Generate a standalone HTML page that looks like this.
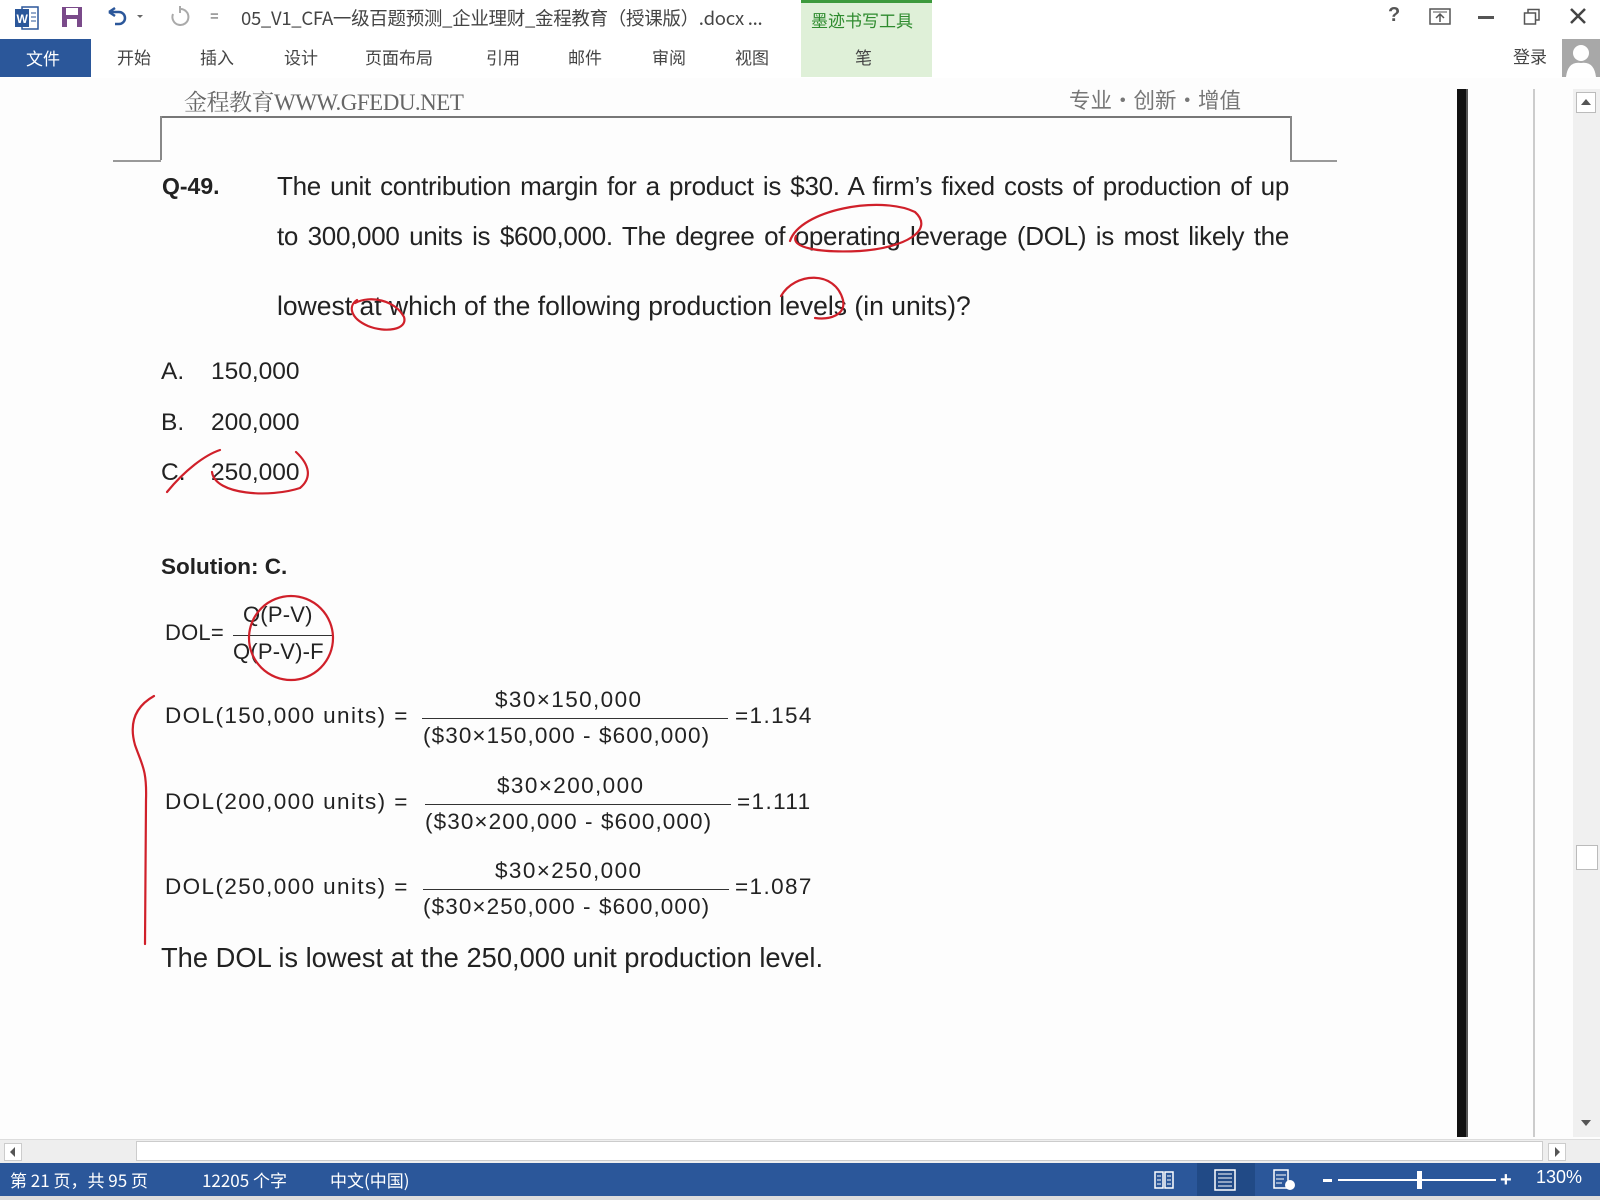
<!DOCTYPE html>
<html><head><meta charset="utf-8">
<style>
*{margin:0;padding:0;box-sizing:border-box}
body{width:1600px;height:1200px;position:relative;overflow:hidden;background:#fdfdfd;font-family:"Liberation Sans","Noto Sans CJK SC",sans-serif;color:#222}
.a{position:absolute;white-space:nowrap}
.cj{font-family:"Noto Sans CJK SC","WenQuanYi Zen Hei",sans-serif}
.tab{position:absolute;top:44px;font-size:17px;color:#444;font-family:"Noto Sans CJK SC",sans-serif}
.q{font-size:24.5px;color:#222}
.m{font-size:22.5px;letter-spacing:1.4px;color:#222}
.fr{position:absolute;border-top:1.5px solid #333}
.st{color:#fff;font-size:17px;font-family:"Noto Sans CJK SC",sans-serif;top:1167px}
</style></head><body>
<div class="a" style="left:0;top:0;width:1600px;height:78px;background:#fff"></div>
<svg class="a" style="left:14px;top:6px" width="26" height="24" viewBox="0 0 26 24"><rect x="8" y="1" width="16" height="22" fill="#fff" stroke="#2b579a" stroke-width="1.5"/><rect x="1" y="3" width="14" height="18" fill="#2b579a"/><text x="2.5" y="17" font-size="12" font-weight="bold" fill="#fff" font-family="Liberation Sans">W</text><line x1="17" y1="7" x2="22" y2="7" stroke="#2b579a"/><line x1="17" y1="11" x2="22" y2="11" stroke="#2b579a"/><line x1="17" y1="15" x2="22" y2="15" stroke="#2b579a"/></svg>
<svg class="a" style="left:61px;top:6px" width="22" height="22" viewBox="0 0 22 22"><rect x="1" y="1" width="20" height="20" fill="#7a4a8a"/><rect x="5" y="2" width="12" height="7" fill="#fff"/><rect x="6" y="13" width="10" height="8" fill="#fff"/></svg>
<svg class="a" style="left:105px;top:6px" width="40" height="22" viewBox="0 0 40 22"><path d="M4 6 L10 2 M4 6 L10 10 M4 6 H14 A6 6 0 0 1 14 18 H10" fill="none" stroke="#2b579a" stroke-width="2.5"/><path d="M32 9 l3 3 l3 -3z" fill="#666"/></svg>
<svg class="a" style="left:168px;top:5px" width="22" height="24" viewBox="0 0 22 24"><path d="M12 4 A8 8 0 1 1 5 9" fill="none" stroke="#aaa" stroke-width="2"/><path d="M12 1 v7" stroke="#aaa" stroke-width="2"/></svg>
<div class="a" style="left:210px;top:8px;font-size:15px;color:#666">=</div>
<div class="a cj" style="left:241px;top:5px;font-size:18.5px;color:#444;letter-spacing:-0.3px">05_V1_CFA一级百题预测_企业理财_金程教育（授课版）.docx ...</div>
<div class="a" style="left:801px;top:0;width:131px;height:77px;background:#dff0d8;border-top:3px solid #3c9a3c"></div>
<div class="a cj" style="left:811px;top:7px;font-size:17px;color:#2e8b2e">墨迹书写工具</div>
<div class="a cj" style="left:855px;top:44px;font-size:17px;color:#444">笔</div>
<div class="a" style="left:0;top:39px;width:91px;height:38px;background:#2b579a"></div>
<div class="a cj" style="left:26px;top:45px;font-size:17px;color:#fff">文件</div>
<div class="tab" style="left:117px">开始</div>
<div class="tab" style="left:200px">插入</div>
<div class="tab" style="left:284px">设计</div>
<div class="tab" style="left:365px">页面布局</div>
<div class="tab" style="left:486px">引用</div>
<div class="tab" style="left:568px">邮件</div>
<div class="tab" style="left:652px">审阅</div>
<div class="tab" style="left:735px">视图</div>
<div class="a" style="left:1388px;top:4px;font-size:20px;font-weight:bold;color:#555">?</div>
<svg class="a" style="left:1429px;top:8px" width="22" height="18"><rect x="1" y="1" width="20" height="15" fill="none" stroke="#555" stroke-width="1.5"/><path d="M7 10 l4 -4 l4 4 M11 6 v8" stroke="#555" fill="none" stroke-width="1.5"/><line x1="4" y1="4" x2="18" y2="4" stroke="#555"/></svg>
<div class="a" style="left:1478px;top:16px;width:16px;height:2.5px;background:#555"></div>
<svg class="a" style="left:1523px;top:8px" width="18" height="18"><rect x="1.5" y="5" width="11" height="11" fill="none" stroke="#555" stroke-width="1.5"/><path d="M5 5 V1.5 H16 V12 H12.5" fill="none" stroke="#555" stroke-width="1.5"/></svg>
<svg class="a" style="left:1569px;top:7px" width="18" height="18"><path d="M2 2 L16 16 M16 2 L2 16" stroke="#444" stroke-width="2.5"/></svg>
<div class="a cj" style="left:1513px;top:43px;font-size:17px;color:#444">登录</div>
<svg class="a" style="left:1562px;top:39px" width="38" height="38"><rect width="38" height="38" fill="#a8a8a8"/><circle cx="19" cy="14" r="8" fill="#fff"/><path d="M4 38 Q6 22 19 24 Q32 22 34 38z" fill="#fff"/></svg>

<div class="a" style="left:184px;top:84px;font-size:23px;color:#666;font-family:'Liberation Serif','Noto Serif CJK SC',serif;letter-spacing:-0.5px">金程教育WWW.GFEDU.NET</div>
<div class="a cj" style="left:1069px;top:84px;font-size:21.5px;color:#777">专业·创新·增值</div>
<div class="a" style="left:160px;top:116px;width:1131px;height:1.5px;background:#777"></div>
<div class="a" style="left:160px;top:116px;width:1.5px;height:44px;background:#888"></div>
<div class="a" style="left:113px;top:160px;width:48px;height:1.5px;background:#999"></div>
<div class="a" style="left:1290px;top:116px;width:1.5px;height:44px;background:#888"></div>
<div class="a" style="left:1290px;top:160px;width:47px;height:1.5px;background:#999"></div>

<div class="a q" style="left:162px;top:173px;font-weight:bold;font-size:23px">Q-49.</div>
<div class="a q" style="left:277px;top:171px;width:1012px;text-align:justify;text-align-last:justify;white-space:normal;font-size:26px;letter-spacing:-0.3px">The unit contribution margin for a product is $30. A firm’s fixed costs of production of up</div>
<div class="a q" style="left:277px;top:221px;width:1012px;text-align:justify;text-align-last:justify;white-space:normal;font-size:26px;letter-spacing:-0.3px">to 300,000 units is $600,000. The degree of operating leverage (DOL) is most likely the</div>
<div class="a q" style="left:277px;top:291px;font-size:26.5px">lowest at which of the following production levels (in units)?</div>
<div class="a q" style="left:161px;top:358px">A.</div><div class="a q" style="left:211px;top:358px">150,000</div>
<div class="a q" style="left:161px;top:409px">B.</div><div class="a q" style="left:211px;top:409px">200,000</div>
<div class="a q" style="left:161px;top:459px">C.</div><div class="a q" style="left:211px;top:459px">250,000</div>

<div class="a q" style="left:161px;top:554px;font-weight:bold;font-size:22.5px">Solution: C.</div>
<div class="a m" style="left:165px;top:620px;letter-spacing:0.2px;font-size:22px">DOL=</div>
<div class="a m" style="left:243px;top:602px;letter-spacing:0.2px;font-size:22px">Q(P-V)</div>
<div class="fr" style="left:233px;top:635px;width:100px"></div>
<div class="a m" style="left:233px;top:639px;letter-spacing:0.2px;font-size:22px">Q(P-V)-F</div>

<div class="a m" style="left:165px;top:703px">DOL(150,000 units) =</div>
<div class="a m" style="left:495px;top:687px">$30×150,000</div>
<div class="fr" style="left:422px;top:718px;width:306px"></div>
<div class="a m" style="left:423px;top:723px;letter-spacing:1.1px">($30×150,000 - $600,000)</div>
<div class="a m" style="left:735px;top:703px">=1.154</div>

<div class="a m" style="left:165px;top:789px">DOL(200,000 units) =</div>
<div class="a m" style="left:497px;top:773px">$30×200,000</div>
<div class="fr" style="left:425px;top:804px;width:306px"></div>
<div class="a m" style="left:425px;top:809px;letter-spacing:1.1px">($30×200,000 - $600,000)</div>
<div class="a m" style="left:737px;top:789px">=1.111</div>

<div class="a m" style="left:165px;top:874px">DOL(250,000 units) =</div>
<div class="a m" style="left:495px;top:858px">$30×250,000</div>
<div class="fr" style="left:423px;top:889px;width:306px"></div>
<div class="a m" style="left:423px;top:894px;letter-spacing:1.1px">($30×250,000 - $600,000)</div>
<div class="a m" style="left:735px;top:874px">=1.087</div>

<div class="a q" style="left:161px;top:942px;font-size:27.3px">The DOL is lowest at the 250,000 unit production level.</div>

<svg class="a" style="left:0;top:0" width="1600" height="1200">
<g fill="none" stroke="#d0202a" stroke-width="2.2" stroke-linecap="round">
<path d="M790 241 C800 210 880 195 915 212 C935 230 905 248 860 251 C820 253 790 248 796 236"/>
<path d="M355 303 C370 295 395 300 404 317 C408 330 385 333 368 326 C350 318 348 306 357 300"/>
<path d="M781 296 C795 272 835 270 843 300 C846 315 830 320 815 318"/>
<path d="M167 492 C185 470 205 455 220 450"/>
<path d="M212 472 C215 495 270 498 300 488 C312 478 310 465 296 452"/>
<circle cx="291" cy="638" r="42"/>
<path d="M154 696 C138 705 128 720 135 745 C142 765 147 770 146 800 L145 944"/>
</g>
</svg>

<div class="a" style="left:1457px;top:89px;width:11px;height:1048px;background:#111;border-right:2px solid #555"></div>
<div class="a" style="left:1533px;top:89px;width:1.5px;height:1048px;background:#ccc"></div>
<div class="a" style="left:1573px;top:89px;width:27px;height:1048px;background:#f0f0f0"></div>
<div class="a" style="left:1576px;top:92px;width:20px;height:21px;border:1px solid #bbb;background:#fff"></div>
<div class="a" style="left:1581px;top:99px;width:0;height:0;border-left:5px solid transparent;border-right:5px solid transparent;border-bottom:6px solid #555"></div>
<div class="a" style="left:1576px;top:845px;width:22px;height:25px;border:1px solid #bbb;background:#fff"></div>
<div class="a" style="left:1581px;top:1120px;width:0;height:0;border-left:5px solid transparent;border-right:5px solid transparent;border-top:6px solid #555"></div>

<div class="a" style="left:0;top:1139px;width:1600px;height:24px;background:#eee;border-top:1px solid #ddd"></div>
<div class="a" style="left:136px;top:1141px;width:1407px;height:20px;background:#fff;border:1px solid #ccc"></div>
<div class="a" style="left:4px;top:1143px;width:18px;height:18px;background:#fff;border:1px solid #ccc"></div>
<div class="a" style="left:10px;top:1147px;border-top:5px solid transparent;border-bottom:5px solid transparent;border-right:5px solid #555"></div>
<div class="a" style="left:1548px;top:1143px;width:18px;height:18px;background:#fff;border:1px solid #ccc"></div>
<div class="a" style="left:1555px;top:1147px;border-top:5px solid transparent;border-bottom:5px solid transparent;border-left:5px solid #555"></div>

<div class="a" style="left:0;top:1163px;width:1600px;height:33px;background:#2b579a"></div>
<div class="a" style="left:0;top:1196px;width:1600px;height:4px;background:#ddd"></div>
<div class="a st" style="left:10px">第 21 页，共 95 页</div>
<div class="a st" style="left:202px">12205 个字</div>
<div class="a st" style="left:330px">中文(中国)</div>
<svg class="a" style="left:1153px;top:1170px" width="22" height="20"><path d="M2 2 H10 V18 H2z M12 2 H20 V18 H12z" fill="none" stroke="#fff" stroke-width="1.5"/><path d="M4 6h4M4 10h4M4 14h4M14 6h4M14 10h4M14 14h4" stroke="#fff"/></svg>
<div class="a" style="left:1197px;top:1163px;width:58px;height:33px;background:#214a86"></div>
<svg class="a" style="left:1214px;top:1169px" width="22" height="22"><rect x="1" y="1" width="20" height="20" fill="none" stroke="#fff" stroke-width="1.5"/><path d="M4 5h14M4 9h14M4 13h14M4 17h14" stroke="#fff"/></svg>
<svg class="a" style="left:1273px;top:1169px" width="24" height="22"><rect x="1" y="1" width="14" height="18" fill="none" stroke="#fff" stroke-width="1.5"/><path d="M3 6h10M3 10h8M3 14h6" stroke="#fff"/><circle cx="17" cy="16" r="5" fill="#fff"/></svg>
<div class="a" style="left:1323px;top:1179px;width:9px;height:3px;background:#fff"></div>
<div class="a" style="left:1338px;top:1179px;width:158px;height:1.5px;background:#fff"></div>
<div class="a" style="left:1417px;top:1171px;width:5px;height:18px;background:#fff"></div>
<div class="a" style="left:1500px;top:1173px;font-size:20px;color:#fff;font-weight:bold;line-height:14px">+</div>
<div class="a" style="left:1536px;top:1167px;font-size:18px;color:#fff">130%</div>
</body></html>
